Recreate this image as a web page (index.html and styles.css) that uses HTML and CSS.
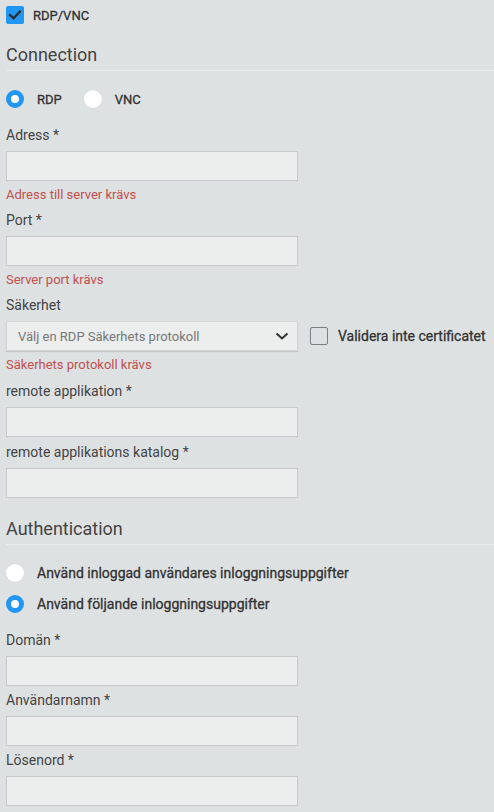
FILE: index.html
```html
<!DOCTYPE html>
<html lang="sv">
<head>
<meta charset="utf-8">
<title>RDP/VNC</title>
<link rel="stylesheet" href="styles.css">
</head>
<body>
<div class="page">
  <div class="check-row">
    <span class="checkbox checked">
      <svg viewBox="0 0 18 18" width="18" height="18"><path d="M4.2 9.2 L7.6 12.4 L13.8 5.6" fill="none" stroke="#2b2f33" stroke-width="2.4" stroke-linecap="square"/></svg>
    </span>
    <span class="check-label">RDP/VNC</span>
  </div>

  <h2 class="section">Connection</h2>

  <div class="radio-row">
    <span class="radio on"></span><span class="radio-label">RDP</span>
    <span class="radio gap"></span><span class="radio-label">VNC</span>
  </div>

  <div class="field first">
    <label class="lbl">Adress *</label>
    <div class="input"></div>
    <div class="error">Adress till server krävs</div>
  </div>

  <div class="field after-error">
    <label class="lbl">Port *</label>
    <div class="input"></div>
    <div class="error">Server port krävs</div>
  </div>

  <div class="field after-error">
    <label class="lbl">Säkerhet</label>
    <div class="select-row">
      <div class="select">
        <span class="select-text">Välj en RDP Säkerhets protokoll</span>
        <svg class="chev" viewBox="0 0 14 8" width="14" height="8"><path d="M1.5 1.5 L7 6.5 L12.5 1.5" fill="none" stroke="#2e3236" stroke-width="2"/></svg>
      </div>
      <span class="checkbox empty"></span>
      <span class="cert-label">Validera inte certificatet</span>
    </div>
    <div class="error">Säkerhets protokoll krävs</div>
  </div>

  <div class="field after-error2">
    <label class="lbl">remote applikation *</label>
    <div class="input"></div>
  </div>

  <div class="field">
    <label class="lbl">remote applikations katalog *</label>
    <div class="input"></div>
  </div>

  <h2 class="section">Authentication</h2>

  <div class="radio-line">
    <span class="radio"></span><span class="radio-label">Använd inloggad användares inloggningsuppgifter</span>
  </div>
  <div class="radio-line second">
    <span class="radio on"></span><span class="radio-label">Använd följande inloggningsuppgifter</span>
  </div>

  <div class="field first auth">
    <label class="lbl">Domän *</label>
    <div class="input"></div>
  </div>
  <div class="field tight">
    <label class="lbl">Användarnamn *</label>
    <div class="input"></div>
  </div>
  <div class="field tight">
    <label class="lbl">Lösenord *</label>
    <div class="input"></div>
  </div>
</div>
</body>
</html>
```

FILE: styles.css
```css
html, body {
  margin: 0;
  padding: 0;
  background: #dee1e2;
}
body {
  font-family: Roboto, "Liberation Sans", Arial, sans-serif;
  color: #444;
}
.page {
  padding: 6px 0 0 6px;
}
.check-row {
  display: flex;
  align-items: center;
  height: 18px;
}
.checkbox {
  width: 18px;
  height: 18px;
  box-sizing: border-box;
  border-radius: 2px;
  flex: none;
  display: block;
}
.checkbox.checked {
  background: #2196f3;
}
.checkbox svg { display: block; }
.checkbox.empty {
  border: 1.5px solid #7c7f82;
  background: transparent;
}
.check-label,
.radio-label,
.cert-label {
  font-weight: 400;
  color: #333;
  -webkit-text-stroke: 0.3px #333;
}
.check-label {
  margin-left: 9px;
  font-size: 13px;
}
.section {
  margin: 20px 0 0 0;
  padding: 0 0 4px 0;
  font-size: 18px;
  line-height: 22px;
  font-weight: 400;
  color: #444;
  border-bottom: 1px solid #e8eaeb;
}
.radio-row {
  display: flex;
  align-items: center;
  margin-top: 19px;
  height: 18px;
}
.radio {
  width: 18px;
  height: 18px;
  border-radius: 50%;
  background: #fff;
  box-sizing: border-box;
  flex: none;
  box-shadow: 0 0 0 0.5px #d6d8d9;
}
.radio.on {
  background: #fff;
  border: 5.5px solid #2196f3;
  box-shadow: none;
}
.radio.gap {
  margin-left: 22px;
}
.radio-label {
  margin-left: 13px;
  font-size: 13px;
}
.radio-line {
  display: flex;
  align-items: center;
  height: 18px;
  margin-top: 19px;
}
.radio-line.second {
  margin-top: 13px;
}
.radio-line .radio-label {
  font-size: 14px;
}
.field {
  margin-top: 7px;
}
.field.first {
  margin-top: 19px;
}
.field.first.auth {
  margin-top: 19px;
}
.field.tight {
  margin-top: 6px;
}
.field.after-error {
  margin-top: 9px;
}
.field.after-error2 {
  margin-top: 10px;
}
.lbl {
  display: block;
  font-size: 14px;
  line-height: 16px;
  margin-bottom: 8px;
  color: #444;
}
.input {
  width: 292px;
  height: 30px;
  box-sizing: border-box;
  background: #eceeed;
  border: 1px solid #c7c9ca;
}
.error {
  margin-top: 6px;
  font-size: 13px;
  line-height: 16px;
  color: #c0504e;
}
.select-row {
  display: flex;
  align-items: center;
}
.select {
  width: 292px;
  height: 30px;
  box-sizing: border-box;
  background: #eceeed;
  border: 1px solid #d3d5d6;
  box-shadow: 0 1px 1px rgba(0,0,0,0.12);
  display: flex;
  align-items: center;
  padding: 0 8px 0 11px;
}
.select-text {
  flex: 1;
  font-size: 13px;
  color: #777;
}
.chev {
  display: block;
}
.select-row .checkbox.empty {
  margin-left: 12px;
}
.cert-label {
  margin-left: 10px;
  font-size: 14px;
}
```
